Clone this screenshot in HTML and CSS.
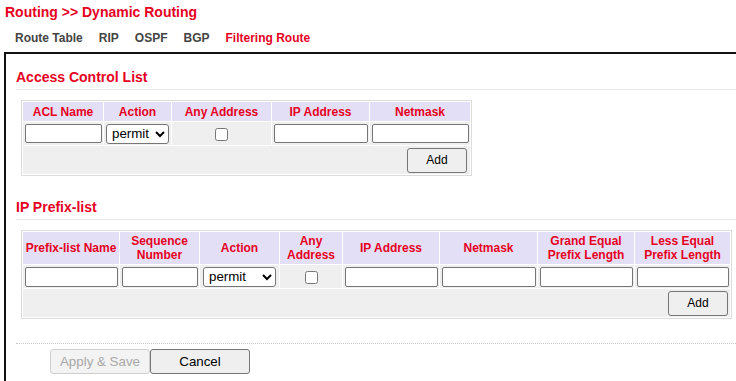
FILE: index.html
```html
<!DOCTYPE html>
<html>
<head>
<meta charset="utf-8">
<link rel="stylesheet" href="styles.css">
</head>
<body>
<div class="title">Routing &gt;&gt; Dynamic Routing</div>
<div class="tabs">
  <span class="tab">Route Table</span>
  <span class="tab">RIP</span>
  <span class="tab">OSPF</span>
  <span class="tab">BGP</span>
  <span class="tab active">Filtering Route</span>
</div>
<div class="panel">
  <div class="section-title first">Access Control List</div>
  <table class="grid acl">
    <colgroup><col class="c80"><col class="c67"><col class="c99"><col class="c97"><col class="c100"></colgroup>
    <tr class="head">
      <th>ACL Name</th><th>Action</th><th>Any Address</th><th>IP Address</th><th>Netmask</th>
    </tr>
    <tr class="data">
      <td><input type="text" class="txt"></td>
      <td class="left"><select class="sel sel-acl"><option>permit</option><option>deny</option></select></td>
      <td><input type="checkbox" class="chk"></td>
      <td><input type="text" class="txt"></td>
      <td><input type="text" class="txt"></td>
    </tr>
    <tr class="addrow acl-add">
      <td colspan="5"><button class="btn-add">Add</button></td>
    </tr>
  </table>

  <div class="section-title second">IP Prefix-list</div>
  <table class="grid prefix">
    <colgroup><col class="c96"><col class="c79"><col class="c79"><col class="c62"><col class="c96"><col class="c97"><col class="c96"><col class="c95"></colgroup>
    <tr class="head tall">
      <th>Prefix-list Name</th><th>Sequence<br>Number</th><th>Action</th><th>Any<br>Address</th><th>IP Address</th><th>Netmask</th><th>Grand Equal<br>Prefix Length</th><th>Less Equal<br>Prefix Length</th>
    </tr>
    <tr class="data d2">
      <td><input type="text" class="txt"></td>
      <td><input type="text" class="txt"></td>
      <td><select class="sel sel-pre"><option>permit</option><option>deny</option></select></td>
      <td><input type="checkbox" class="chk"></td>
      <td><input type="text" class="txt"></td>
      <td><input type="text" class="txt"></td>
      <td><input type="text" class="txt"></td>
      <td><input type="text" class="txt"></td>
    </tr>
    <tr class="addrow">
      <td colspan="8"><button class="btn-add">Add</button></td>
    </tr>
  </table>

  <div class="footer">
    <button class="btn-big" disabled>Apply &amp; Save</button><button class="btn-big">Cancel</button>
  </div>
</div>
</body>
</html>
```

FILE: styles.css
```css
html {
  overflow: hidden;
}
body {
  margin: 0;
  font-family: "Liberation Sans", Arial, sans-serif;
  background: #fff;
  color: #000;
}
.title {
  padding: 4px 0 0 5px;
  font-size: 14px;
  line-height: 16px;
  font-weight: bold;
  color: #e6001f;
}
.tabs {
  margin-top: 11px;
  padding-left: 15px;
  display: flex;
  gap: 16px;
  font-size: 12px;
  line-height: 14px;
  font-weight: bold;
  color: #444;
}
.tab.active {
  color: #e6001f;
}
.panel {
  margin-top: 7px;
  margin-left: 4px;
  border-top: 2px solid #111;
  border-left: 2px solid #111;
  padding-left: 10px;
  padding-bottom: 20px;
}
.section-title {
  font-size: 14px;
  line-height: 16px;
  font-weight: bold;
  color: #e6001f;
  padding-bottom: 4px;
  border-bottom: 1px solid #e8e8e8;
}
.section-title.first {
  margin-top: 15px;
}
.section-title.second {
  margin-top: 23px;
}
.grid {
  margin: 10px 0 0 5px;
  border: 1px solid #dcdcdc;
  border-spacing: 1px;
  table-layout: fixed;
  background: #fff;
}
.grid.acl { width: 451px; }
.grid.prefix { width: 711px; }
.c80 { width: 80px; }
.c67 { width: 67px; }
.c99 { width: 99px; }
.c97 { width: 97px; }
.c100 { width: 100px; }
.c96 { width: 96px; }
.c79 { width: 79px; }
.c62 { width: 62px; }
.c95 { width: 95px; }
.grid th, .grid td {
  padding: 0;
}
.head th {
  height: 19px;
  background: #e3dff6;
  color: #e6001f;
  font-size: 12px;
  line-height: 14px;
  font-weight: bold;
  text-align: center;
  vertical-align: middle;
}
.head.tall th {
  height: 32px;
}
.data td {
  height: 23px;
  background: #efefef;
  text-align: center;
  vertical-align: middle;
}
.txt {
  box-sizing: border-box;
  width: calc(100% - 3px);
  height: 19px;
  margin: 0 0 0 1px;
  padding: 1px 2px;
  border: 1px solid #767676;
  border-radius: 2px;
  background: #fff;
  font-family: "Liberation Sans", Arial, sans-serif;
  font-size: 13px;
  vertical-align: middle;
}
.d2 .txt {
  height: 20px;
}
.sel {
  box-sizing: border-box;
  height: 20px;
  border: 1px solid #767676;
  border-radius: 3px;
  background: #fff;
  color: #000;
  font-family: "Liberation Sans", Arial, sans-serif;
  font-size: 13.33px;
  padding: 0 0 0 1px;
  vertical-align: middle;
}
.sel-acl { width: 63px; }
.sel-pre { width: 73px; }
.chk {
  width: 13px;
  height: 13px;
  margin: 0;
  vertical-align: middle;
}
.addrow td {
  height: 28px;
  background: #efefef;
  text-align: right;
  vertical-align: middle;
  padding-right: 2px;
}
.acl-add td {
  padding-right: 3px;
}
.btn-add {
  box-sizing: border-box;
  width: 60px;
  height: 25px;
  background: #efefef;
  border: 1px solid #767676;
  border-radius: 3px;
  font-family: "Liberation Sans", Arial, sans-serif;
  font-size: 12px;
  color: #000;
  padding: 0;
  vertical-align: middle;
}
.footer {
  margin-top: 24px;
  border-top: 1px dotted #c8c8c8;
  padding: 5px 0 0 34px;
  display: flex;
}
.btn-big {
  box-sizing: border-box;
  width: 100px;
  height: 25px;
  background: #efefef;
  border: 1px solid #767676;
  border-radius: 3px;
  font-family: "Liberation Sans", Arial, sans-serif;
  font-size: 13.33px;
  color: #000;
  padding: 0;
}
.btn-big:disabled {
  background: #f3f3f3;
  border-color: #cfcfcf;
  color: #a8a8a8;
}
```
